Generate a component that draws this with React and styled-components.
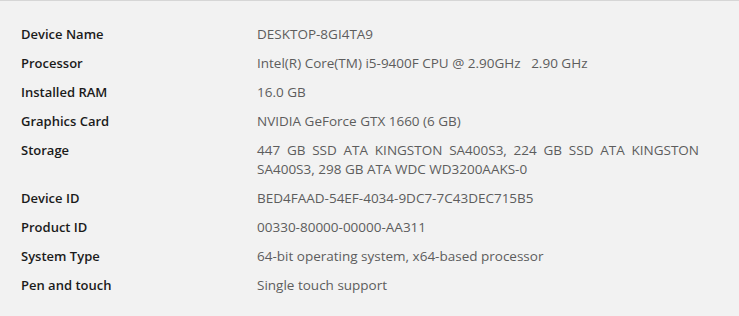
import React from 'react'
import styled, { createGlobalStyle } from 'styled-components'

const specs = [
    { label: 'Device Name', value: ['DESKTOP-8GI4TA9'] },
    { label: 'Processor', value: ['Intel(R) Core(TM) i5-9400F CPU @ 2.90GHz\u00a0\u00a0\u00a02.90 GHz'] },
    { label: 'Installed RAM', value: ['16.0 GB'] },
    { label: 'Graphics Card', value: ['NVIDIA GeForce GTX 1660 (6 GB)'] },
    {
        label: 'Storage',
        value: [
            '447 GB SSD ATA KINGSTON SA400S3, 224 GB SSD ATA KINGSTON',
            'SA400S3, 298 GB ATA WDC WD3200AAKS-0',
        ],
    },
    { label: 'Device ID', value: ['BED4FAAD-54EF-4034-9DC7-7C43DEC715B5'] },
    { label: 'Product ID', value: ['00330-80000-00000-AA311'] },
    { label: 'System Type', value: ['64-bit operating system, x64-based processor'] },
    { label: 'Pen and touch', value: ['Single touch support'] },
];

function App() {
    return (
        <>
            <GlobalStyle />
            <Panel>
                <SpecList>
                    {specs.map((spec) => (
                        <React.Fragment key={spec.label}>
                            <Label>{spec.label}</Label>
                            <Value>
                                {spec.value.map((line, i) => (
                                    <Line key={i} $justify={i < spec.value.length - 1}>
                                        {line}
                                    </Line>
                                ))}
                            </Value>
                        </React.Fragment>
                    ))}
                </SpecList>
            </Panel>
        </>
    );
}

const GlobalStyle = createGlobalStyle`
    html, body {
        margin: 0;
        padding: 0;
        background: #f2f2f2;
    }
    #root {
        height: 100vh;
    }
`;

const Panel = styled.div`
    box-sizing: border-box;
    height: 100%;
    background-color: #f2f2f2;
    border-top: 1px solid #d6d6d6;
    padding: 24px 0 0 21px;
    font-family: "Open Sans", "Noto Sans", sans-serif;
    font-size: 13px;
`;

const SpecList = styled.div`
    display: grid;
    grid-template-columns: 236px 442px;
    row-gap: 10px;
    line-height: 19px;
`;

const Label = styled.div`
    font-weight: 600;
    color: #1b1b1b;
`;

const Value = styled.div`
    color: #5d5d5d;
    font-size: 13.5px;
`;

const Line = styled.div`
    white-space: nowrap;
    ${(p) => p.$justify && `
        white-space: normal;
        text-align: justify;
        text-align-last: justify;
    `}
`;

export default App
